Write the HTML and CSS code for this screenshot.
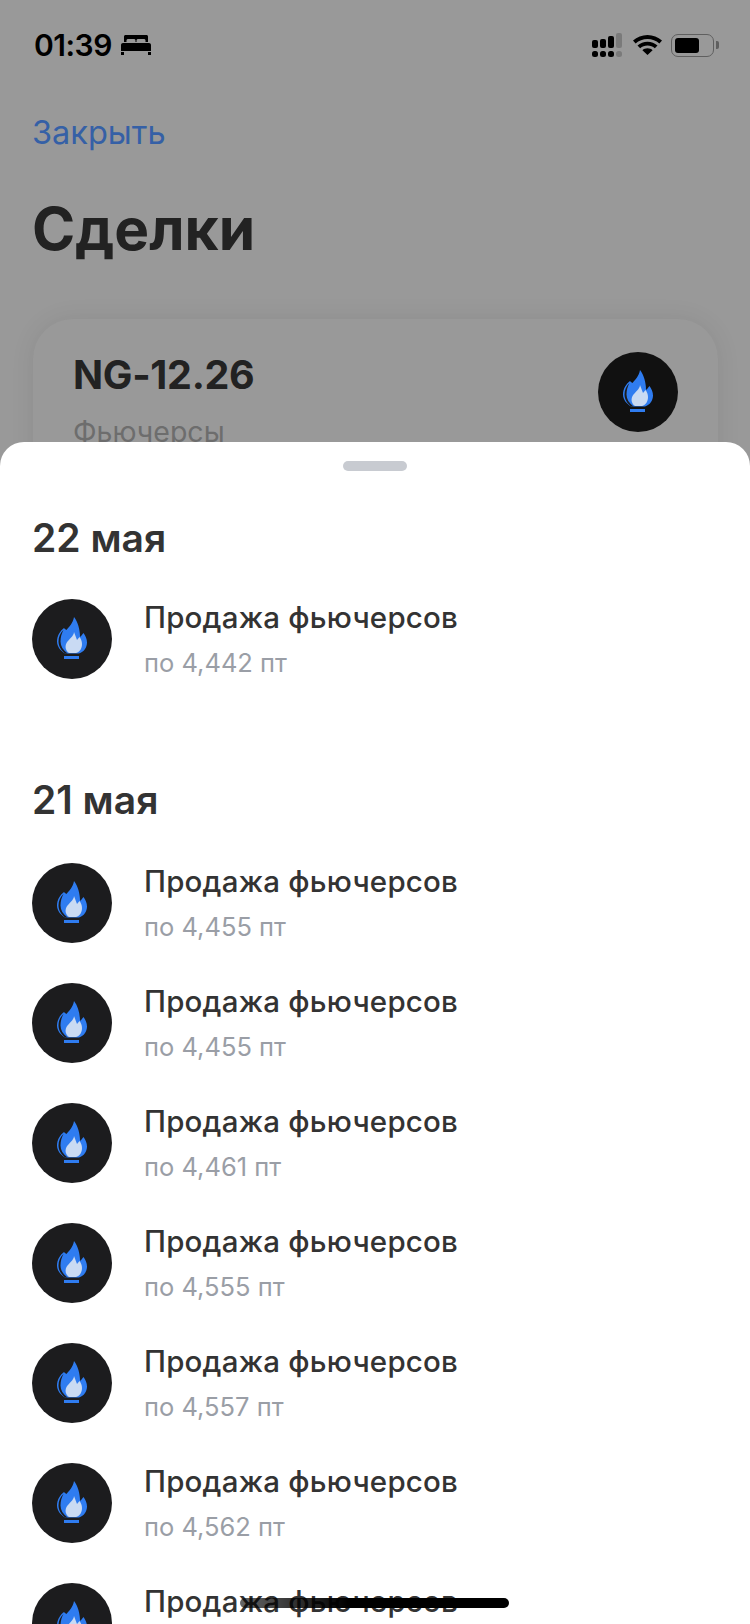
FILE: index.html
```html
<!DOCTYPE html>
<html lang="ru">
<head>
    <meta charset="UTF-8">
    <meta name="viewport" content="width=device-width, initial-scale=1.0">
    <title>Сделки</title>
    <link rel="stylesheet" href="styles.css">
</head>
<body>
    <svg class="defs" width="0" height="0">
        <defs>
            <symbol id="flame" viewBox="0 0 80 80">
                <path fill="#2f7cf0" d="M42 18C41 24 37 28 34.500 31 33.500 30.500 33 30 32 29 28 32 25 37 25 42.500 25 48 29 52 33 54.500H47C52 53 55 48.500 55 43.500 55 40 53.500 37 51.500 34 50 36 49 37 48 38 48 31 46 23 42 18Z"/>
                <path fill="#1c1c1e" d="M31.500 31C28 34 26.500 38.500 26.500 42.500 26.500 47.500 29.500 51.500 33 54.500H35.500C31 51 28.500 47 28.500 42.500 28.500 38.500 29.500 34.500 31.500 31Z"/>
                <path fill="#c9daf3" d="M42 33C42 37 37 40 34.500 44 32.500 48 34 52 37 54H44C48 53 50 49 50 45 50 42 49 40 47.500 38L45 41C44 38 43 36 42 33Z"/>
                <rect fill="#2f7cf0" x="32" y="57" width="15" height="3"/>
            </symbol>
        </defs>
    </svg>

    <div class="screen">
        <div class="statusbar">
            <div class="status-left">
                <span class="time">01:39</span>
                <svg class="bed" viewBox="0 0 30 20">
                    <path fill="#000" d="M3 1.500C3 .7 3.700 0 4.500 0h21c.8 0 1.500.7 1.500 1.500V7h-2.500V5.500c0-1-.8-1.500-1.700-1.500h-5.600c-.9 0-1.700.5-1.700 1.500V7h-1V5.500c0-1-.8-1.500-1.700-1.500H7.200c-.9 0-1.700.5-1.700 1.500V7H3z"/>
                    <path fill="#000" d="M2 8h26c1.100 0 2 .9 2 2v6H0v-6c0-1.100.9-2 2-2zM0 17h3v3H0zM27 17h3v3h-3z"/>
                </svg>
            </div>
            <div class="status-right">
                <svg class="signal" viewBox="0 0 30 24">
                    <rect x="0" y="7" width="6" height="8" rx="2"/>
                    <rect x="8" y="6" width="6" height="9" rx="2"/>
                    <rect x="16" y="3" width="6" height="12" rx="2"/>
                    <rect class="off" x="24" y="0" width="6" height="15" rx="2"/>
                    <rect x="0" y="18" width="6" height="6" rx="2.500"/>
                    <rect x="8" y="18" width="6" height="6" rx="2.500"/>
                    <rect x="16" y="18" width="6" height="6" rx="2.500"/>
                    <rect class="off" x="24" y="18" width="6" height="6" rx="2.500"/>
                </svg>
                <svg class="wifi" viewBox="0 0 29 20">
                    <path d="M14.500 0C9 0 4 2.100 0 5.600l2.600 2.800C5.800 5.600 10 3.900 14.500 3.900s8.700 1.700 11.900 4.500L29 5.600C25 2.100 20 0 14.500 0z"/>
                    <path d="M14.500 6.700c-3.800 0-7.300 1.400-10 3.800l2.700 2.800c2-1.700 4.500-2.700 7.300-2.700s5.300 1 7.300 2.700l2.700-2.800c-2.700-2.400-6.200-3.800-10-3.800z"/>
                    <path d="M14.500 13.300c-2 0-3.700.7-5.100 1.900l5.100 4.800 5.100-4.800c-1.400-1.200-3.100-1.900-5.100-1.900z"/>
                </svg>
                <div class="battery">
                    <div class="battery-body"><div class="battery-level"></div></div>
                    <div class="battery-cap"></div>
                </div>
            </div>
        </div>

        <a class="close-link" href="#">Закрыть</a>
        <h1 class="page-title">Сделки</h1>

        <div class="card">
            <div class="card-text">
                <div class="card-name">NG-12.26</div>
                <div class="card-type">Фьючерсы</div>
            </div>
            <div class="logo"><svg><use href="#flame"/></svg></div>
        </div>

        <!-- Bottom sheet -->
        <div class="sheet">
            <div class="handle"></div>

            <h2 class="day first">22 мая</h2>
            <div class="deal">
                <div class="logo"><svg><use href="#flame"/></svg></div>
                <div class="deal-text">
                    <div class="deal-title">Продажа фьючерсов</div>
                    <div class="deal-price">по 4,442 пт</div>
                </div>
            </div>

            <h2 class="day second">21 мая</h2>
            <div class="deal">
                <div class="logo"><svg><use href="#flame"/></svg></div>
                <div class="deal-text">
                    <div class="deal-title">Продажа фьючерсов</div>
                    <div class="deal-price">по 4,455 пт</div>
                </div>
            </div>
            <div class="deal">
                <div class="logo"><svg><use href="#flame"/></svg></div>
                <div class="deal-text">
                    <div class="deal-title">Продажа фьючерсов</div>
                    <div class="deal-price">по 4,455 пт</div>
                </div>
            </div>
            <div class="deal">
                <div class="logo"><svg><use href="#flame"/></svg></div>
                <div class="deal-text">
                    <div class="deal-title">Продажа фьючерсов</div>
                    <div class="deal-price">по 4,461 пт</div>
                </div>
            </div>
            <div class="deal">
                <div class="logo"><svg><use href="#flame"/></svg></div>
                <div class="deal-text">
                    <div class="deal-title">Продажа фьючерсов</div>
                    <div class="deal-price">по 4,555 пт</div>
                </div>
            </div>
            <div class="deal">
                <div class="logo"><svg><use href="#flame"/></svg></div>
                <div class="deal-text">
                    <div class="deal-title">Продажа фьючерсов</div>
                    <div class="deal-price">по 4,557 пт</div>
                </div>
            </div>
            <div class="deal">
                <div class="logo"><svg><use href="#flame"/></svg></div>
                <div class="deal-text">
                    <div class="deal-title">Продажа фьючерсов</div>
                    <div class="deal-price">по 4,562 пт</div>
                </div>
            </div>
            <div class="deal">
                <div class="logo"><svg><use href="#flame"/></svg></div>
                <div class="deal-text">
                    <div class="deal-title">Продажа фьючерсов</div>
                </div>
            </div>
        </div>

        <div class="home-indicator"></div>
    </div>
</body>
</html>
```

FILE: styles.css
```css
* {
    margin: 0;
    padding: 0;
    box-sizing: border-box;
    font-family: Inter, 'Liberation Sans', sans-serif;
}
html, body {
    height: 100%;
    overflow: hidden;
}
.defs {
    position: absolute;
}
.screen {
    position: relative;
    width: 750px;
    height: 1624px;
    overflow: hidden;
    background-color: #999999;
}
/* Status bar */
.statusbar {
    display: flex;
    justify-content: space-between;
    align-items: center;
    height: 24px;
    margin-top: 33px;
    padding: 0 35px 0 34px;
}
.status-left {
    display: flex;
    align-items: center;
    gap: 9px;
}
.time {
    font-size: 30px;
    font-weight: 600;
    line-height: 24px;
    letter-spacing: -0.5px;
    color: #000000;
}
.bed {
    width: 30px;
    height: 20px;
}
.status-right {
    display: flex;
    align-items: center;
    margin-right: -4px;
}
.signal {
    width: 30px;
    height: 24px;
    fill: #000000;
}
.signal .off {
    fill: #000000;
    opacity: 0.2;
}
.wifi {
    width: 29px;
    height: 20px;
    margin-left: 11px;
    fill: #000000;
}
.battery {
    display: flex;
    align-items: center;
    margin-left: 9px;
}
.battery-body {
    width: 43px;
    height: 23px;
    padding: 3px;
    border: 1.5px solid #5f5f5f;
    border-radius: 7px;
}
.battery-level {
    width: 24px;
    height: 100%;
    background-color: #000000;
    border-radius: 3px;
}
.battery-cap {
    width: 3px;
    height: 8px;
    margin-left: 2px;
    background-color: #5f5f5f;
    border-radius: 0 2px 2px 0;
}
/* Header */
.close-link {
    display: block;
    margin: 56px 0 0 32px;
    font-size: 32.5px;
    line-height: 40px;
    color: #3560a6;
    text-decoration: none;
}
.page-title {
    margin: 42px 0 0 32px;
    font-size: 58.5px;
    font-weight: 700;
    line-height: 68px;
    color: #222222;
}
/* Card behind the sheet */
.card {
    display: flex;
    justify-content: space-between;
    height: 300px;
    margin: 56px 32px 0 33px;
    padding: 33px 40px 0 40px;
    background-color: #999999;
    border-radius: 40px;
    box-shadow: 0 0 24px rgba(0, 0, 0, 0.08);
}
.card-name {
    margin-top: -3px;
    font-size: 39.5px;
    font-weight: 700;
    line-height: 52px;
    letter-spacing: -0.3px;
    color: #222222;
}
.card-type {
    margin-top: 15px;
    font-size: 28.5px;
    line-height: 32px;
    color: #6d6d6d;
}
.logo {
    flex-shrink: 0;
    width: 80px;
    height: 80px;
    background-color: #1c1c1e;
    border-radius: 50%;
}
.logo svg {
    display: block;
    width: 80px;
    height: 80px;
}
.card .logo {
    background-color: #111111;
}
/* Bottom sheet */
.sheet {
    position: absolute;
    left: 0;
    right: 0;
    top: 442px;
    bottom: 0;
    overflow: hidden;
    padding: 19px 32px 0 32px;
    background-color: #ffffff;
    border-radius: 24px 24px 0 0;
}
.handle {
    width: 64px;
    height: 10px;
    margin: 0 auto;
    background-color: #c8cbd1;
    border-radius: 5px;
}
.day {
    font-size: 39px;
    font-weight: 600;
    line-height: 44px;
    color: #333333;
}
.day.first {
    margin-top: 45px;
    margin-bottom: 39px;
}
.day.second {
    margin-top: 59px;
    margin-bottom: 41px;
}
.deal {
    display: flex;
    gap: 32px;
    height: 120px;
}
.deal-title {
    font-size: 29.5px;
    font-weight: 550;
    line-height: 36px;
    letter-spacing: 0.2px;
    color: #333333;
}
.deal-price {
    margin-top: 10px;
    font-size: 25.5px;
    line-height: 36px;
    color: #9a9ea6;
}
.home-indicator {
    position: absolute;
    left: 240px;
    top: 1598px;
    width: 269px;
    height: 10px;
    border-radius: 5px;
    background: linear-gradient(90deg, rgba(0, 0, 0, 0.6), #000000 40%);
}
```
